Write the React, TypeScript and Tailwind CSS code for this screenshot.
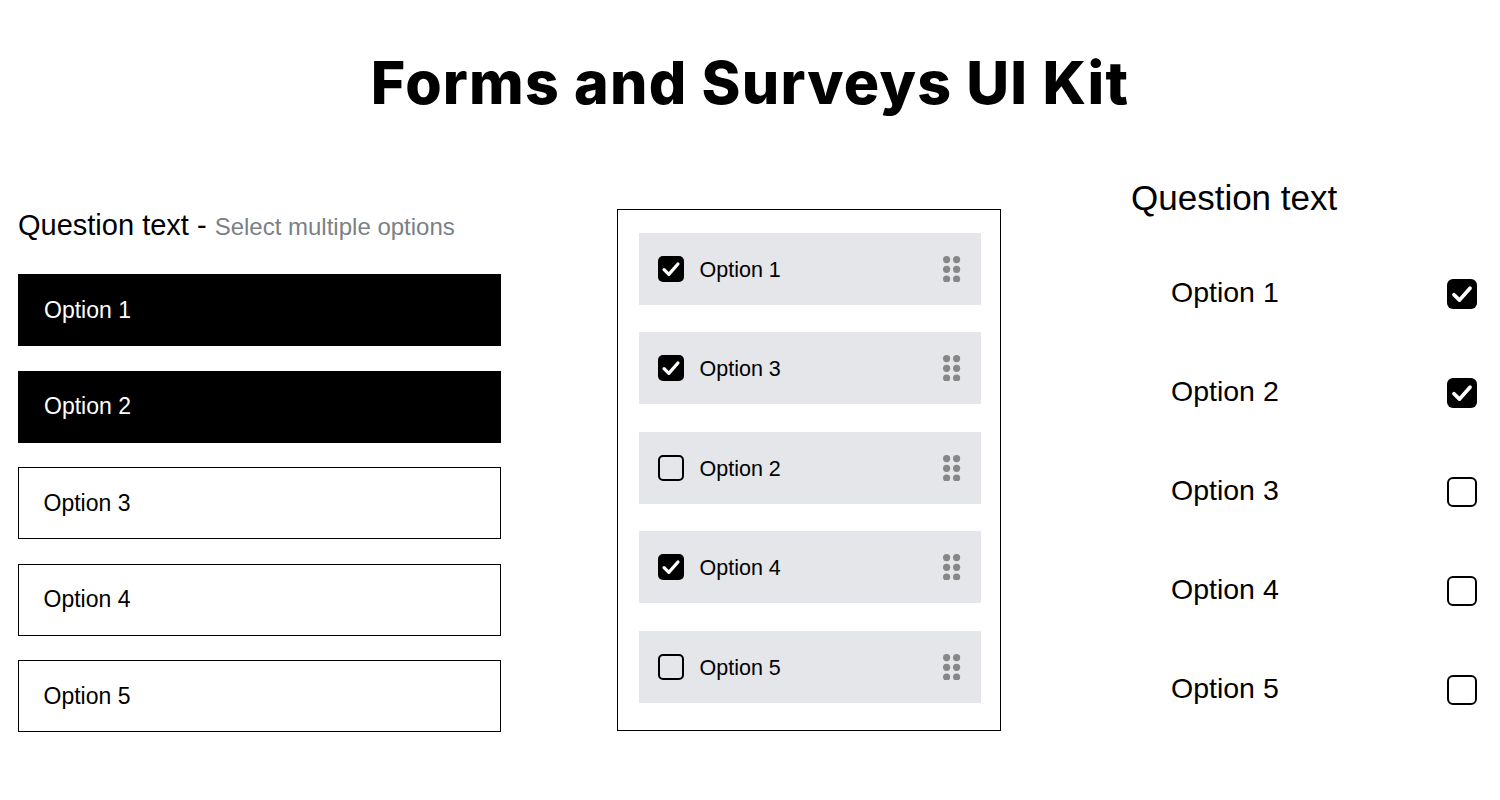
import React from "react";

const font = { fontFamily: '"Liberation Sans", Arial, sans-serif' };

function CheckIcon({ size, stroke }: { size: number; stroke: number }) {
  return (
    <svg width={size} height={size} viewBox="0 0 24 24" fill="none">
      <path d="M5.6 12.6 L10 16.9 L18.4 7.4" stroke="white" strokeWidth={stroke} strokeLinecap="round" strokeLinejoin="round" />
    </svg>
  );
}

function SmallBox({ checked }: { checked: boolean }) {
  return checked ? (
    <div className="w-[26px] h-[26px] rounded-[5px] bg-black flex items-center justify-center shrink-0">
      <CheckIcon size={26} stroke={3} />
    </div>
  ) : (
    <div className="w-[26px] h-[26px] rounded-[5px] border-2 border-black shrink-0" />
  );
}

function BigBox({ checked }: { checked: boolean }) {
  return checked ? (
    <div className="w-[30px] h-[30px] rounded-[6px] bg-black flex items-center justify-center shrink-0">
      <CheckIcon size={30} stroke={3} />
    </div>
  ) : (
    <div className="w-[30px] h-[30px] rounded-[6px] border-2 border-black shrink-0" />
  );
}

function DragDots() {
  return (
    <svg width="18" height="26" viewBox="0 0 18 26" className="shrink-0">
      {[0, 1, 2].map((r) =>
        [0, 1].map((c) => (
          <circle key={`${r}-${c}`} cx={3.6 + c * 10} cy={3.6 + r * 9.7} r={3.6} fill="#878787" />
        ))
      )}
    </svg>
  );
}

export default function App() {
  const left = [
    { label: "Option 1", sel: true },
    { label: "Option 2", sel: true },
    { label: "Option 3", sel: false },
    { label: "Option 4", sel: false },
    { label: "Option 5", sel: false },
  ];
  const middle = [
    { label: "Option 1", sel: true },
    { label: "Option 3", sel: true },
    { label: "Option 2", sel: false },
    { label: "Option 4", sel: true },
    { label: "Option 5", sel: false },
  ];
  const right = [
    { label: "Option 1", sel: true },
    { label: "Option 2", sel: true },
    { label: "Option 3", sel: false },
    { label: "Option 4", sel: false },
    { label: "Option 5", sel: false },
  ];
  return (
    <div className="w-[1500px] h-[800px] bg-white text-black overflow-hidden" style={font}>
      <div className="h-[178px] pt-[54px] flex justify-center">
        <h1
          className="text-[59px] leading-[58px] font-extrabold tracking-[1.2px] text-black"
          style={{ fontFamily: 'Inter, "Noto Sans", sans-serif' }}
        >
          Forms and Surveys UI Kit
        </h1>
      </div>
      <div className="flex items-start">
        {/* Left column */}
        <div className="ml-[18px] w-[483px] mt-[30px] flex flex-col">
          <div className="h-[34px] leading-[34px] whitespace-nowrap">
            <span className="text-[29px]">Question text - </span>
            <span className="text-[24px] text-[#7b7f86]">Select multiple options</span>
          </div>
          <div className="mt-[32px] flex flex-col gap-[24.5px]">
            {left.map((o) => (
              <div
                key={o.label}
                className={
                  o.sel
                    ? "h-[72px] bg-black text-white flex items-center pl-[26px] text-[23px]"
                    : "h-[72px] bg-white border-[1.5px] border-black text-black flex items-center pl-[24.5px] text-[23px]"
                }
              >
                {o.label}
              </div>
            ))}
          </div>
        </div>

        {/* Middle column */}
        <div className="ml-[116px] mt-[31px] w-[384px] h-[522px] border-[1.5px] border-black pt-[22.5px] pl-[20.5px] pr-[19.5px] flex flex-col gap-[27.5px]">
          {middle.map((o) => (
            <div key={o.label} className="h-[72px] bg-[#e4e6ea] flex items-center pl-[19px] pr-[20px]">
              <SmallBox checked={o.sel} />
              <span className="ml-[16px] text-[21.5px] flex-1 mt-[3px]">{o.label}</span>
              <DragDots />
            </div>
          ))}
        </div>

        {/* Right column */}
        <div className="ml-[130px] w-[346px] flex flex-col">
          <div className="h-[40px] leading-[40px] text-[35px] whitespace-nowrap">Question text</div>
          <div className="mt-[26.5px] flex flex-col">
            {right.map((o) => (
              <div key={o.label} className="h-[99px] flex items-center justify-between pl-[40px]">
                <span className="text-[28.5px] -mt-[3px]">{o.label}</span>
                <BigBox checked={o.sel} />
              </div>
            ))}
          </div>
        </div>
      </div>
    </div>
  );
}
